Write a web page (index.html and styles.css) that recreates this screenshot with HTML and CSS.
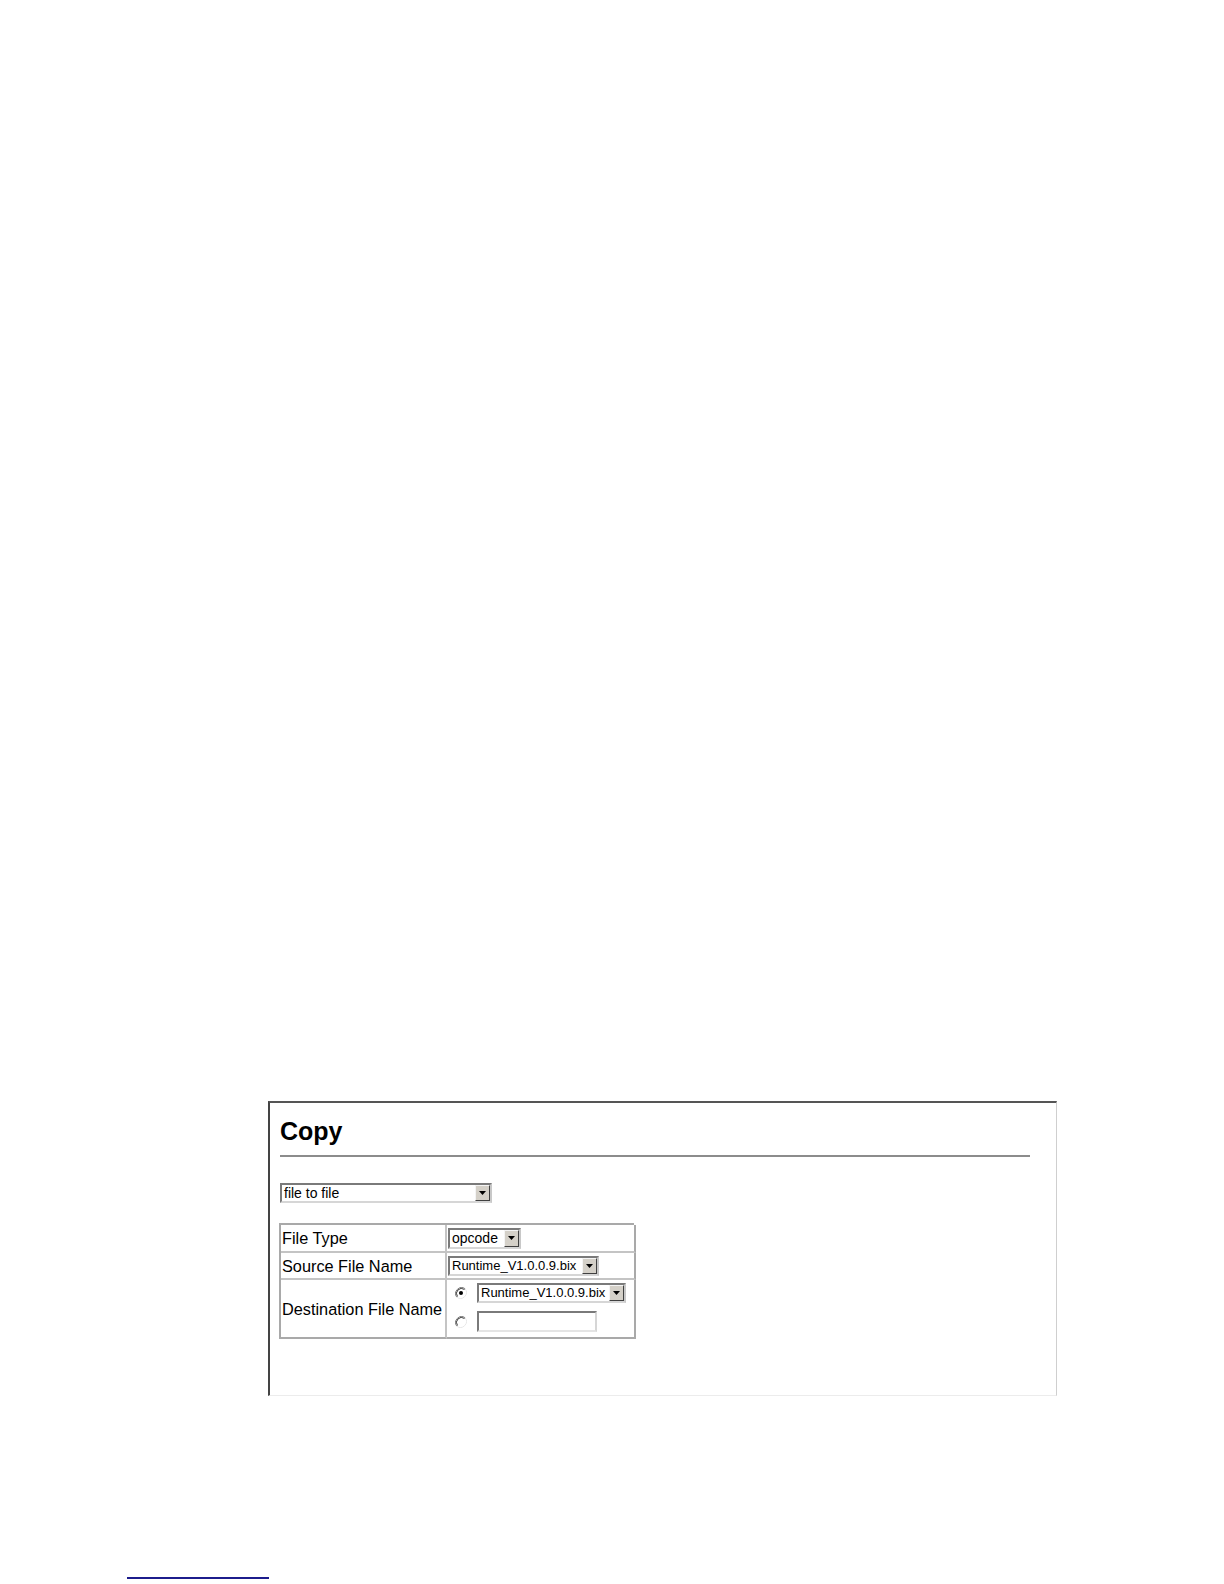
FILE: index.html
```html
<!DOCTYPE html>
<html lang="en">
<head>
<meta charset="utf-8">
<title>Copy</title>
<link rel="stylesheet" href="styles.css">
</head>
<body>
<div class="frame">
  <h1 class="title">Copy</h1>
  <div class="rule"></div>
  <div class="sel sel-mode">
    <span class="sel-val">file to file</span>
    <span class="sel-btn"><svg width="7" height="4" viewBox="0 0 7 4"><path d="M0 0H7L3.5 4Z" fill="#000"/></svg></span>
  </div>
  <div class="tbl">
    <div class="cell lbl r1">File Type</div>
    <div class="cell val r1">
      <div class="sel sel-op">
        <span class="sel-val">opcode</span>
        <span class="sel-btn"><svg width="7" height="4" viewBox="0 0 7 4"><path d="M0 0H7L3.5 4Z" fill="#000"/></svg></span>
      </div>
    </div>
    <div class="cell lbl r2">Source File Name</div>
    <div class="cell val r2">
      <div class="sel sel-rt">
        <span class="sel-val small">Runtime_V1.0.0.9.bix</span>
        <span class="sel-btn"><svg width="7" height="4" viewBox="0 0 7 4"><path d="M0 0H7L3.5 4Z" fill="#000"/></svg></span>
      </div>
    </div>
    <div class="cell lbl r3">Destination File Name</div>
    <div class="cell val r3 dest">
      <div class="dest-row">
        <svg class="radio" width="12" height="12" viewBox="0 0 12 12">
          <path d="M10.2 1.8A6 6 0 0 0 1.8 10.2" fill="none" stroke="#808080" stroke-width="1"/>
          <path d="M9.5 2.5A5 5 0 0 0 2.5 9.5" fill="none" stroke="#404040" stroke-width="1"/>
          <path d="M1.8 10.2A6 6 0 0 0 10.2 1.8" fill="none" stroke="#e8e8e8" stroke-width="1"/>
          <circle cx="6" cy="6" r="2" fill="#000"/>
        </svg>
        <div class="sel sel-rt2">
          <span class="sel-val small">Runtime_V1.0.0.9.bix</span>
          <span class="sel-btn"><svg width="7" height="4" viewBox="0 0 7 4"><path d="M0 0H7L3.5 4Z" fill="#000"/></svg></span>
        </div>
      </div>
      <div class="dest-row">
        <svg class="radio" width="12" height="12" viewBox="0 0 12 12">
          <path d="M10.2 1.8A6 6 0 0 0 1.8 10.2" fill="none" stroke="#808080" stroke-width="1"/>
          <path d="M9.5 2.5A5 5 0 0 0 2.5 9.5" fill="none" stroke="#404040" stroke-width="1"/>
          <path d="M1.8 10.2A6 6 0 0 0 10.2 1.8" fill="none" stroke="#e8e8e8" stroke-width="1"/>
        </svg>
        <div class="txt"></div>
      </div>
    </div>
  </div>
</div>
<div class="foot-line"></div>
</body>
</html>
```
FILE: styles.css
```css
html, body {
  margin: 0;
  padding: 0;
  background: #fff;
}
body {
  font-family: "Liberation Sans", Arial, sans-serif;
  color: #000;
}
.frame {
  box-sizing: border-box;
  margin: 1101px 0 0 268px;
  width: 789px;
  height: 295px;
  border-top: 2px solid #555;
  border-left: 2px solid #444;
  border-right: 1px solid #cfcfcf;
  border-bottom: 1px solid #ececec;
  padding: 13px 26px 0 10px;
}
.title {
  margin: 0;
  font-size: 25px;
  line-height: 30px;
  font-weight: 700;
  height: 30px;
}
.rule {
  margin-top: 9px;
  height: 2px;
  background: #8c8c8c;
}
.sel {
  box-sizing: border-box;
  display: flex;
  align-items: stretch;
  height: 20px;
  border: 2px solid;
  border-color: #7a7a7a #c8c8c8 #d6d6d6 #7a7a7a;
  background: #fff;
}
.sel-val {
  flex: 1;
  font-size: 14px;
  line-height: 16px;
  padding-left: 2px;
  white-space: nowrap;
  overflow: hidden;
}
.sel-val.small {
  font-size: 13px;
}
.sel-btn {
  box-sizing: border-box;
  width: 15px;
  background: #d4d0c8;
  border: 1px solid;
  border-color: #f4f4f4 #404040 #404040 #f4f4f4;
  display: flex;
  align-items: center;
  justify-content: center;
}
.sel-mode {
  margin-top: 26px;
  width: 212px;
}
.tbl {
  margin-top: 20px;
  margin-left: -1px;
  width: 355px;
  display: grid;
  grid-template-columns: 166px 189px;
  border-top: 2px solid #a9a9a9;
  border-left: 2px solid #a9a9a9;
  box-sizing: border-box;
}
.cell {
  box-sizing: border-box;
  border-right: 2px solid #c4c4c4;
  border-bottom: 2px solid #c4c4c4;
  display: flex;
  align-items: center;
}
.cell.val {
  border-right-color: #a9a9a9;
}
.cell.r3 {
  border-bottom-color: #a9a9a9;
}
.lbl {
  font-size: 16.3px;
  line-height: 18px;
  padding-left: 1px;
  white-space: nowrap;
}
.r1 { height: 28px; }
.r2 { height: 27px; }
.r3 { height: 59px; }
.val {
  padding-left: 1px;
}
.sel-op {
  width: 73px;
  height: 21px;
}
.sel-rt {
  width: 151px;
}
.dest {
  flex-direction: column;
  align-items: flex-start;
  justify-content: flex-start;
  padding-top: 3px;
  padding-left: 8px;
  gap: 8px;
}
.dest-row {
  display: flex;
  align-items: center;
  gap: 10px;
}
.radio {
  display: block;
}
.sel-rt2 {
  width: 149px;
}
.txt {
  box-sizing: border-box;
  width: 120px;
  height: 21px;
  border: 2px solid;
  border-color: #7a7a7a #d6d6d6 #e4e4e4 #7a7a7a;
  background: #fff;
}
.foot-line {
  margin: 181px 0 0 127px;
  width: 142px;
  height: 0;
  border-top: 2px solid #1c1c8c;
}
```
